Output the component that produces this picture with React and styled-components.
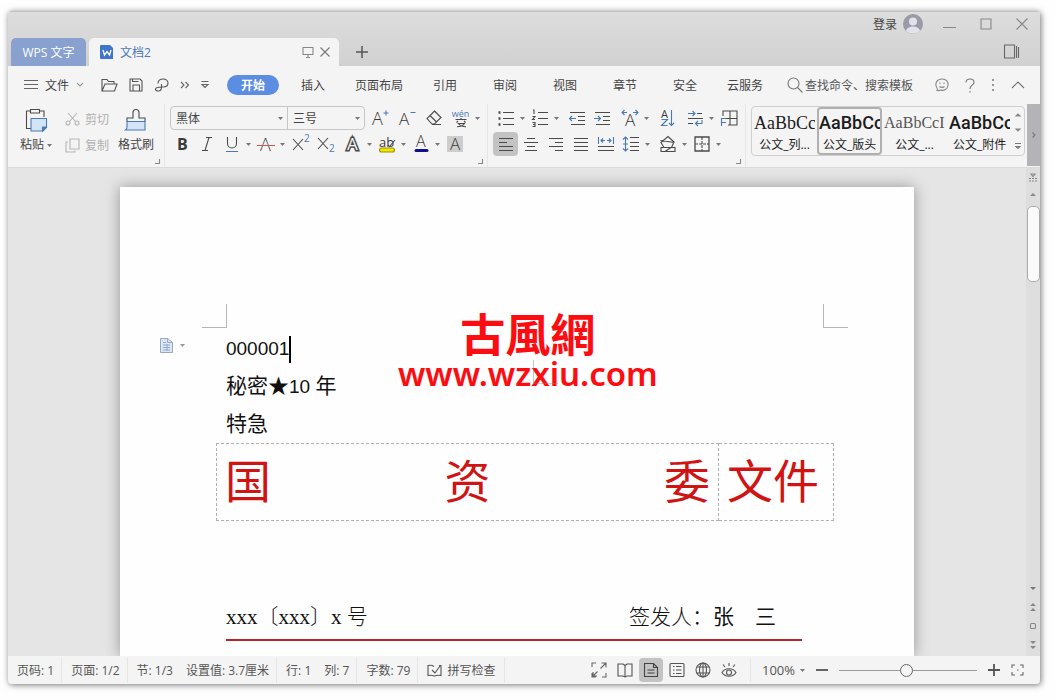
import { useState } from 'react';
import styled, { createGlobalStyle, css } from 'styled-components';

const MENUS = ['开始', '插入', '页面布局', '引用', '审阅', '视图', '章节', '安全', '云服务'];

const STYLES = [
  { sample: 'AaBbCc', label: '公文_列...', kind: 'song' },
  { sample: 'AaBbCc', label: '公文_版头', kind: 'hei' },
  { sample: 'AaBbCcI', label: '公文_...', kind: 'songSmall' },
  { sample: 'AaBbCc', label: '公文_附件', kind: 'hei' },
];

const BLUE = '#4a7ab5';

const Icon = ({ w = 18, h = 18, color = '#4a4a4a', children }) => (
  <svg
    width={w}
    height={h}
    viewBox={`0 0 ${w} ${h}`}
    fill="none"
    stroke={color}
    strokeWidth="1.1"
    aria-hidden="true"
  >
    {children}
  </svg>
);

const Caret = ({ color = '#777' }) => (
  <svg width="5" height="3" viewBox="0 0 5 3" fill={color} aria-hidden="true">
    <path d="M0 0h5L2.5 3z" />
  </svg>
);

const Tool = ({ label, arrow, spaced, active, children }) => (
  <ToolButton type="button" aria-label={label} $spaced={spaced}>
    <ToolFace $active={active}>{children}</ToolFace>
    {arrow && (
      <ToolArrow>
        <Caret />
      </ToolArrow>
    )}
  </ToolButton>
);

const TitleBar = () => (
  <TitleBarWrap>
    <Tabs>
      <HomeTab type="button">WPS 文字</HomeTab>
      <DocTab>
        <svg width="14" height="15" viewBox="0 0 14 15" aria-hidden="true">
          <path d="M1 0h9l3 3v11H1a1 1 0 0 1-1-1V1a1 1 0 0 1 1-1z" fill="#3f74cf" />
          <path d="M3 5l1.500 5L7 6.500 9.500 10 11 5" fill="none" stroke="#fff" strokeWidth="1.300" />
        </svg>
        <DocName>文档2</DocName>
        <PlainButton type="button" aria-label="窗口模式">
          <Icon w={12} h={12} color="#888">
            <path d="M1 1.500h10v7H1zM6 8.500v3M4 11.500h4" />
          </Icon>
        </PlainButton>
        <PlainButton type="button" aria-label="关闭标签">
          <Icon w={10} h={10} color="#777">
            <path d="M0.500 0.500l9 9M9.500 0.500l-9 9" />
          </Icon>
        </PlainButton>
      </DocTab>
      <NewTab type="button" aria-label="新建标签">
        <Icon w={12} h={12} color="#555">
          <path d="M6 0v12M0 6h12" strokeWidth="1.500" />
        </Icon>
      </NewTab>
    </Tabs>
    <WindowSide>
      <WindowControls>
        <Login type="button">
          登录
          <svg width="20" height="20" viewBox="0 0 20 20" aria-hidden="true">
            <circle cx="10" cy="10" r="10" fill="#9a9aa8" />
            <circle cx="10" cy="7.500" r="4" fill="#e2e2ea" />
            <path d="M3 17c1-6 13-6 14 0a10 10 0 0 1-14 0z" fill="#e2e2ea" />
          </svg>
        </Login>
        <PlainButton type="button" aria-label="最小化">
          <Icon w={13} h={12} color="#888">
            <path d="M0 9.500h13" />
          </Icon>
        </PlainButton>
        <PlainButton type="button" aria-label="最大化">
          <Icon w={12} h={12} color="#888">
            <path d="M1 1h10v10H1z" />
          </Icon>
        </PlainButton>
        <PlainButton type="button" aria-label="关闭">
          <Icon w={12} h={12} color="#888">
            <path d="M0.500 0.500l11 11M11.500 0.500l-11 11" />
          </Icon>
        </PlainButton>
      </WindowControls>
      <SideToggle type="button" aria-label="侧栏">
        <Icon w={16} h={15} color="#666">
          <path d="M.5 1h10v13H.5zM12.500 2v12M14.500 3v11" />
        </Icon>
      </SideToggle>
    </WindowSide>
  </TitleBarWrap>
);

const MenuBar = () => {
  const [current, setCurrent] = useState('开始');

  return (
    <MenuBarWrap>
      <FileButton type="button">
        <Icon w={14} h={12} color="#666">
          <path d="M0 1.500h14M0 5.500h14M0 9.500h14" />
        </Icon>
        文件
        <Icon w={8} h={6} color="#999">
          <path d="M1 1l3 3 3-3" />
        </Icon>
      </FileButton>
      <QuickAccess>
        <PlainButton type="button" aria-label="打开">
          <Icon w={17} h={14} color="#555">
            <path d="M1 13V1.500h5l1.500 2H13v2.500M1 13l3-7h12l-2.500 7z" />
          </Icon>
        </PlainButton>
        <PlainButton type="button" aria-label="保存">
          <Icon w={14} h={14} color="#555">
            <path d="M1 1h10l2 2v10H1zM4 13V7h6.500v6M3.500 1v2.500h6" />
          </Icon>
        </PlainButton>
        <PlainButton type="button" aria-label="输出">
          <Icon w={15} h={14} color="#555">
            <path d="M4 5.500C4 2.500 6 1 9 1s5 1.500 5 4-2 4-5 4H7.500V6M7.500 9c0 2.500-1 4-3 4-1.500 0-3-.5-3-1.800C1.500 9.500 4 9 7.500 9" />
          </Icon>
        </PlainButton>
        <PlainButton type="button" aria-label="更多">
          <Icon w={10} h={8} color="#666">
            <path d="M1 1l3 3-3 3M5.500 1l3 3-3 3" />
          </Icon>
        </PlainButton>
        <PlainButton type="button" aria-label="自定义快速访问">
          <Icon w={8} h={8} color="#666">
            <path d="M0.500 0.500h7M1 3.500l3 3 3-3z" />
          </Icon>
        </PlainButton>
      </QuickAccess>
      <MenuTabs>
        {MENUS.map((menu) => (
          <MenuTab
            key={menu}
            type="button"
            $active={menu === current}
            onClick={() => setCurrent(menu)}
          >
            {menu}
          </MenuTab>
        ))}
      </MenuTabs>
      <Search>
        <Icon w={16} h={16} color="#777">
          <circle cx="6.500" cy="6.500" r="5.500" />
          <path d="M10.500 10.500l5 5" />
        </Icon>
        <SearchInput aria-label="查找" placeholder="查找命令、搜索模板" />
      </Search>
      <MenuExtras>
        <PlainButton type="button" aria-label="反馈">
          <Icon w={14} h={14} color="#888">
            <path d="M2 12.500c.6-.8.6-1.600 0-2.500C-1 5 2.500 1 7 1s6.500 3 6 6.500c-.5 3.500-4 5.500-7 4.600-1.300.5-2.500.7-4 .4zM5 4.500v1.500M9 4.500v1.500M4.500 8.500c1.200 1.200 3.800 1.200 5 0" />
          </Icon>
        </PlainButton>
        <PlainButton type="button" aria-label="帮助">
          <Icon w={10} h={15} color="#777">
            <path d="M1 4.500C1 2 3 1 5 1s4 1.300 4 3.500C9 7 5 7 5 11M5 13v1.500" />
          </Icon>
        </PlainButton>
        <PlainButton type="button" aria-label="选项">
          <Icon w={4} h={12} color="#777">
            <path d="M2 0v2M2 5v2M2 10v2" strokeWidth="1.500" />
          </Icon>
        </PlainButton>
        <PlainButton type="button" aria-label="收起功能区">
          <Icon w={14} h={8} color="#777">
            <path d="M1 7l6-6 6 6" />
          </Icon>
        </PlainButton>
      </MenuExtras>
    </MenuBarWrap>
  );
};

const Launcher = () => (
  <LauncherButton type="button" aria-label="更多设置">
    <Icon w={5} h={5} color="#888">
      <path d="M4.500 0v4.500H0" />
    </Icon>
  </LauncherButton>
);

const ClipboardGroup = () => (
  <ClipboardWrap>
    <BigTool type="button">
      <Icon w={24} h={24}>
        <path d="M6 3H2.500v17.500H7M16 3h4v6M6.500 1.500h9V5h-9z" />
        <path d="M7 10.500h15.500v9l-3.500 3.500H7z" fill="#d3e4f7" stroke={BLUE} />
        <path d="M22 19h-3.500v4z" fill="#4a7ab5" stroke={BLUE} />
      </Icon>
      <BigLabel>
        粘贴
        <Caret />
      </BigLabel>
    </BigTool>
    <ClipColumn>
      <ClipTool type="button" disabled>
        <Icon w={15} h={14} color="#b5b5b5">
          <path d="M3 1l8 9M12 1L4 10" />
          <circle cx="3" cy="11" r="2" />
          <circle cx="12" cy="11" r="2" />
        </Icon>
        剪切
      </ClipTool>
      <ClipTool type="button" disabled>
        <Icon w={15} h={15} color="#b5b5b5">
          <path d="M5 1h9v10H5zM3 4H1v10h9v-1.500" />
        </Icon>
        复制
      </ClipTool>
    </ClipColumn>
    <BigTool type="button">
      <Icon w={24} h={24}>
        <path d="M3 13.500V10h6V4.500a3 3 0 0 1 6 0V10h6v3.500" />
        <path d="M3 13.500h18V22H1.500c1-.8 1.500-2 1.500-3z" fill="#d3e4f7" stroke={BLUE} />
      </Icon>
      <BigLabel>格式刷</BigLabel>
    </BigTool>
    <Launcher />
  </ClipboardWrap>
);

const FontGroup = () => (
  <FontWrap>
    <ToolRow $gap={2}>
      <FontBox>
        <SelectWrap $width={116}>
          <Select aria-label="字体" defaultValue="黑体">
            <option>黑体</option>
            <option>宋体</option>
          </Select>
          <Caret />
        </SelectWrap>
        <SelectWrap $width={77}>
          <Select aria-label="字号" defaultValue="三号">
            <option>三号</option>
            <option>四号</option>
          </Select>
          <Caret />
        </SelectWrap>
      </FontBox>
      <Tool label="增大字号">
        <Icon>
          <Glyph x="1" y="16" $size={18}>A</Glyph>
          <path d="M12.500 4h5M15 1.500v5" stroke={BLUE} />
        </Icon>
      </Tool>
      <Tool label="减小字号">
        <Icon>
          <Glyph x="1" y="16" $size={17}>A</Glyph>
          <path d="M12.500 3.500h5" stroke={BLUE} />
        </Icon>
      </Tool>
      <Tool label="清除格式">
        <Icon>
          <path d="M9.500 2L16 8.500 9.500 15H7L2 9.500zM5 6.500l6.500 6.500M7 15.500h9" />
        </Icon>
      </Tool>
      <Tool label="拼音指南" arrow>
        <PinyinIcon>
          <span>wén</span>
          <Icon w={12} h={9}>
            <path d="M6 0v1.500M.5 1.500h11M3 3L1.500 4.500M9 3l1.500 1.500M2.500 5.500h7C8 8 5 8.700 2 8.700M3.500 5.500C5 7.800 8 8.700 11 8.700" />
          </Icon>
        </PinyinIcon>
      </Tool>
    </ToolRow>
    <ToolRow>
      <Tool label="加粗">
        <Icon>
          <Glyph x="4" y="15" $size={16} $weight={700}>B</Glyph>
        </Icon>
      </Tool>
      <Tool label="倾斜">
        <Icon>
          <path d="M8 2.500h6M4 15.500h6M11 2.500l-4 13" />
        </Icon>
      </Tool>
      <Tool label="下划线" arrow>
        <Icon>
          <path d="M4.500 2v6.500a4.500 4.500 0 0 0 9 0V2" />
          <path d="M3 16.500h12" stroke={BLUE} />
        </Icon>
      </Tool>
      <Tool label="删除线" arrow>
        <Icon>
          <Glyph x="3" y="16" $size={18}>A</Glyph>
          <path d="M0 10.500h18" stroke="#c55" strokeWidth="1.200" />
        </Icon>
      </Tool>
      <Tool label="上标">
        <Icon>
          <path d="M2 4l10 11M12 4L2 15" />
          <Glyph x="13" y="7" $size={10} $weight={400} $color={BLUE}>2</Glyph>
        </Icon>
      </Tool>
      <Tool label="下标">
        <Icon>
          <path d="M2 3l10 11M12 3L2 14" />
          <Glyph x="13" y="17" $size={10} $weight={400} $color={BLUE}>2</Glyph>
        </Icon>
      </Tool>
      <Tool label="文字效果" arrow spaced>
        <Icon>
          <OutlineGlyph x="3" y="15">A</OutlineGlyph>
        </Icon>
      </Tool>
      <Tool label="突出显示" arrow>
        <Icon>
          <rect x="1.500" y="13" width="15" height="4" rx="2" fill="#f1e800" stroke="#98920c" />
          <Glyph x="1" y="12" $size={13} $weight={400}>ab</Glyph>
          <path d="M11 12l6-7" />
        </Icon>
      </Tool>
      <Tool label="字体颜色" arrow>
        <Icon>
          <Glyph x="4" y="12" $size={16}>A</Glyph>
          <path d="M4 15.500h11" stroke="#10108c" strokeWidth="3" strokeLinecap="round" />
        </Icon>
      </Tool>
      <Tool label="字符底纹">
        <Icon>
          <rect x="1" y="1" width="16" height="16" fill="#cdcdcd" stroke="none" />
          <Glyph x="4" y="15" $size={17}>A</Glyph>
        </Icon>
      </Tool>
    </ToolRow>
    <Launcher />
  </FontWrap>
);

const ParagraphGroup = () => (
  <ParagraphWrap>
    <ToolRow>
      <Tool label="项目符号" arrow>
        <Icon>
          <path d="M6 3.500h11M6 9.500h11M6 15.500h11" />
          <path d="M1.500 3.500h2M1.500 9.500h2M1.500 15.500h2" strokeWidth="2.500" />
        </Icon>
      </Tool>
      <Tool label="编号" arrow>
        <Icon>
          <path d="M7 3.500h10M7 9.500h10M7 15.500h10" />
          <path d="M2 1l1 0v4M1.500 7.500h2.500l-2.500 3h2.500M1.500 13.500h2.500v4H1.500M2 15.500h2" />
        </Icon>
      </Tool>
      <Tool label="减少缩进" spaced>
        <Icon>
          <path d="M2 3.500h15M10 7.500h7M10 11.500h7M3 15.500h14" />
          <path d="M8 9.500H1.500M4 7L1.500 9.500 4 12" stroke={BLUE} />
        </Icon>
      </Tool>
      <Tool label="增加缩进">
        <Icon>
          <path d="M2 3.500h15M10 7.500h7M10 11.500h7M3 15.500h14" />
          <path d="M1 9.500h6.500M5 7l2.500 2.500L5 12" stroke={BLUE} />
        </Icon>
      </Tool>
      <Tool label="字符缩放" arrow spaced>
        <Icon>
          <Glyph x="4" y="17" $size={17}>A</Glyph>
          <path d="M6 3.500H1M3.500 1L1 3.500 3.500 6M12 3.500h5M14.500 1L17 3.500 14.500 6" stroke={BLUE} />
        </Icon>
      </Tool>
      <Tool label="排序" spaced>
        <Icon>
          <Glyph x="3" y="9" $size={11} $weight={400}>A</Glyph>
          <path d="M3.500 10.500h6l-6 6h6M13.500 1v15.500M11 14l2.500 2.500L16 14" stroke={BLUE} />
        </Icon>
      </Tool>
      <Tool label="换行" arrow spaced>
        <Icon>
          <path d="M2 9.500h15M2 14.500h5M11 4.500h5" />
          <path d="M2 4.500h7M6.500 2L9 4.500 6.500 7M16 11v3.500h-6M12 12l-2.500 2.500L12 17" stroke={BLUE} />
        </Icon>
      </Tool>
      <Tool label="制表位">
        <Icon>
          <path d="M3 7V2h14v14H8M10 2v14M3 9.500h14" />
          <path d="M6 9.500H1.500V17M1.500 13.500H6" stroke={BLUE} />
        </Icon>
      </Tool>
    </ToolRow>
    <ToolRow>
      <Tool label="左对齐" active>
        <Icon>
          <path d="M2 3.500h14M2 7.500h8M2 11.500h14M2 15.500h14" />
        </Icon>
      </Tool>
      <Tool label="居中">
        <Icon>
          <path d="M5 3.500h8M2 7.500h14M5 11.500h8M3 15.500h12" />
        </Icon>
      </Tool>
      <Tool label="右对齐">
        <Icon>
          <path d="M2 3.500h14M8 7.500h8M2 11.500h14M8 15.500h8" />
        </Icon>
      </Tool>
      <Tool label="两端对齐">
        <Icon>
          <path d="M2 3.500h14M2 7.500h14M2 11.500h14M2 15.500h14" />
        </Icon>
      </Tool>
      <Tool label="分散对齐">
        <Icon>
          <path d="M1 11.500h16M1 15.500h16" />
          <path d="M1.500 2v7M16.500 2v7M8 5.500H4M6 3.500l-2 2 2 2M10 5.500h4M12 3.500l2 2-2 2" stroke={BLUE} />
        </Icon>
      </Tool>
      <Tool label="行距" arrow>
        <Icon>
          <path d="M8 2.500h9M8 7.500h9M8 11.500h9M8 15.500h9" />
          <path d="M3.500 2v14M1 4.500L3.500 2 6 4.500M1 13.500L3.500 16 6 13.500M1 9h5" stroke={BLUE} />
        </Icon>
      </Tool>
      <Tool label="底纹颜色" arrow spaced>
        <Icon>
          <path d="M2 7.500L9 1.500l6 5.500-2.500 5.500H5zM1.500 5.500l14 2M2 12.500h14v4H2zM6 16.500l6-4" />
        </Icon>
      </Tool>
      <Tool label="边框" arrow>
        <Icon>
          <path d="M2 2h14v14H2z" strokeWidth="1.300" />
          <path d="M9 2v14M2 9h14" strokeDasharray="3 1" />
        </Icon>
      </Tool>
    </ToolRow>
    <Launcher />
  </ParagraphWrap>
);

const StyleGallery = () => (
  <GalleryWrap>
    <Gallery>
      {STYLES.map((item, index) => (
        <StyleCard key={item.label} type="button" $active={index === 1}>
          <Sample $kind={item.kind}>{item.sample}</Sample>
          <StyleName>{item.label}</StyleName>
        </StyleCard>
      ))}
      <GalleryScroll>
        <PlainButton type="button" aria-label="上一行">
          <Icon w={6} h={4} color="#888">
            <path d="M1 3l2-2 2 2z" fill="#888" />
          </Icon>
        </PlainButton>
        <PlainButton type="button" aria-label="下一行">
          <Icon w={6} h={4} color="#888">
            <path d="M1 1l2 2 2-2z" fill="#888" />
          </Icon>
        </PlainButton>
        <PlainButton type="button" aria-label="展开样式">
          <Icon w={6} h={7} color="#777">
            <path d="M0 .5h6M1 3.500l2 2 2-2z" />
          </Icon>
        </PlainButton>
      </GalleryScroll>
    </Gallery>
    <MoreTools type="button" aria-label="更多工具">
      <Icon w={4} h={6} color="#777">
        <path d="M.5 .5L3 3 .5 5.500" />
      </Icon>
    </MoreTools>
  </GalleryWrap>
);

const Document = () => (
  <Workspace>
    <Canvas>
      <Page>
        <Margins>
          <Corner $side="left" />
          <Corner $side="right" />
        </Margins>
        <ParagraphMark type="button" aria-label="段落布局">
          <svg width="13" height="15" viewBox="0 0 13 15" aria-hidden="true">
            <path d="M.5 .5h7l5 4v10H.5z" fill="#dce6f2" stroke="#94a9c8" />
            <path
              d="M7.500 .5v4h5M3 4.500h3M3 7h7M3 9.500h7M3 12h7M7 6v7"
              fill="none"
              stroke="#94a9c8"
            />
          </svg>
          <Caret color="#999" />
        </ParagraphMark>
        <Line>
          <Latin>000001</Latin>
          <TextCursor />
        </Line>
        <Line>
          秘密★<Latin>10 </Latin>年
        </Line>
        <Line>特急</Line>
        <HeadTable>
          <tbody>
            <tr>
              <OrgCell>
                <Spread>
                  <span>国</span>
                  <span>资</span>
                  <span>委</span>
                </Spread>
              </OrgCell>
              <KindCell>文件</KindCell>
            </tr>
          </tbody>
        </HeadTable>
        <IssueRow>
          <span>xxx〔xxx〕x 号</span>
          <span>
            签发人：<Signer>张　三</Signer>
          </span>
        </IssueRow>
        <Watermark>
          <Brand>古風網</Brand>
          <Site>www.wzxiu.com</Site>
          <CenterMark />
        </Watermark>
      </Page>
    </Canvas>
    <Scrollbar>
      <Icon w={10} h={9} color="#888">
        <path d="M3 1h4L5 3.500zM1 5.500h2M4 5.500h2M7 5.500h2M1 8h2M4 8h2M7 8h2" />
      </Icon>
      <Icon w={6} h={4}>
        <path d="M0 4h6L3 1z" fill="#888" stroke="none" />
      </Icon>
      <Thumb />
      <ScrollEnd>
        <Icon w={6} h={4}>
          <path d="M0 0h6L3 3z" fill="#777" stroke="none" />
        </Icon>
        <Icon w={6} h={8}>
          <path d="M0 3h6L3 0zM0 8h6L3 5z" fill="#888" stroke="none" />
        </Icon>
        <Icon w={6} h={6} color="#888">
          <rect x=".5" y=".5" width="5" height="5" rx="1" />
        </Icon>
        <Icon w={6} h={8}>
          <path d="M0 0h6L3 3zM0 5h6L3 8z" fill="#888" stroke="none" />
        </Icon>
      </ScrollEnd>
    </Scrollbar>
  </Workspace>
);

const StatusBar = () => {
  const [zoom, setZoom] = useState(49);

  return (
    <StatusWrap>
      <StatusCell>页码: 1</StatusCell>
      <StatusCell>页面: 1/2</StatusCell>
      <StatusCell>
        <span>节: 1/3</span>
        <span>设置值: 3.7厘米</span>
      </StatusCell>
      <StatusCell>
        <span>行: 1</span>
        <span>列: 7</span>
      </StatusCell>
      <StatusCell>字数: 79</StatusCell>
      <SpellCheck type="button">
        <Icon w={15} h={13} color="#555">
          <path d="M7 2.500C5 1 3 1 1 1.500v10c2-.5 4-.5 6.500.5 2.500-1 4.500-1 6.500-.5v-10h-2M5 6l3 3 5-7" />
        </Icon>
        拼写检查
      </SpellCheck>
      <ViewButtons>
        <ViewButton type="button" aria-label="全屏">
          <Icon w={16} h={16} color="#666">
            <path d="M1 5V1h4M1 11v4h4M15 11v4h-4M9.500 6.500L15 1M10.500 1H15v4.500M6.500 9.500L2 14M2 10v4h4" />
          </Icon>
        </ViewButton>
        <ViewButton type="button" aria-label="阅读版式">
          <Icon w={16} h={16} color="#555">
            <path d="M1 2h5l2 1.500L10 2h5v12h-5l-2 1-2-1H1zM8 3.500V15" />
          </Icon>
        </ViewButton>
        <ViewButton type="button" aria-label="页面视图" $active>
          <Icon w={16} h={16} color="#444">
            <path d="M1.500 1.500h9l4 4v9h-13zM10.500 1.500v4h4M4.500 8h7M4.500 11h7" />
          </Icon>
        </ViewButton>
        <ViewButton type="button" aria-label="大纲">
          <Icon w={16} h={16} color="#555">
            <rect x="1" y="1.500" width="14" height="13" rx="1" />
            <path d="M4 4.500h1.500M4 8h1.500M4 11.500h1.500M7 4.500h5.500M7 8h5.500M7 11.500h5.500" />
          </Icon>
        </ViewButton>
        <ViewButton type="button" aria-label="Web 版式">
          <Icon w={16} h={16} color="#555">
            <circle cx="8" cy="8" r="7" />
            <ellipse cx="8" cy="8" rx="3.500" ry="7" />
            <path d="M8 1v14M2 5h12M2 11h12" />
          </Icon>
        </ViewButton>
        <ViewButton type="button" aria-label="护眼模式">
          <Icon w={16} h={16} color="#555">
            <path d="M1 10.500c3-5 11-5 14 0-3 5-11 5-14 0zM8 1v3M2 2.500l2 2.500M14 2.500L12 5" />
            <circle cx="8" cy="10.500" r="2.500" />
          </Icon>
        </ViewButton>
      </ViewButtons>
      <ZoomArea>
        <ZoomValue type="button">
          100%
          <Caret />
        </ZoomValue>
        <PlainButton type="button" aria-label="缩小" onClick={() => setZoom(zoom - 5)}>
          <Icon w={12} h={12} color="#555">
            <path d="M0 6h12" strokeWidth="1.800" />
          </Icon>
        </PlainButton>
        <ZoomSlider
          type="range"
          aria-label="显示比例"
          value={zoom}
          onChange={(e) => setZoom(Number(e.target.value))}
        />
        <PlainButton type="button" aria-label="放大" onClick={() => setZoom(zoom + 5)}>
          <Icon w={12} h={12} color="#555">
            <path d="M0 6h12M6 0v12" strokeWidth="1.800" />
          </Icon>
        </PlainButton>
        <PlainButton type="button" aria-label="最佳显示比例">
          <Icon w={13} h={12} color="#666">
            <path d="M1 4V1h3M9 1h3v3M12 8v3H9M4 11H1V8M6 6h1.500" />
          </Icon>
        </PlainButton>
      </ZoomArea>
    </StatusWrap>
  );
};

const App = () => (
  <>
    <GlobalStyle />
    <Desktop>
      <AppWindow>
        <TitleBar />
        <MenuBar />
        <Ribbon>
          <ClipboardGroup />
          <FontGroup />
          <ParagraphGroup />
          <StyleGallery />
        </Ribbon>
        <Document />
        <StatusBar />
      </AppWindow>
    </Desktop>
  </>
);

export default App;

const GlobalStyle = createGlobalStyle`
  * {
    box-sizing: border-box;
  }

  body {
    margin: 0;
    background: #fefefe;
    font-family: 'Open Sans', 'Noto Sans CJK SC', sans-serif;
    font-size: 12px;
    color: #444;
  }

  button,
  input,
  select {
    margin: 0;
    padding: 0;
    border: none;
    background: none;
    font: inherit;
    color: inherit;
  }

  svg {
    display: block;
    flex: none;
    overflow: visible;
  }
`;

const Desktop = styled.div`
  height: 100vh;
  padding: 11px 16px 16px 8px;
`;

const AppWindow = styled.div`
  display: flex;
  flex-direction: column;
  height: 100%;
  overflow: hidden;
  border-radius: 4px;
  background: #f4f4f4;
  box-shadow: 1px 1px 6px rgba(0, 0, 0, 0.55);
`;

const PlainButton = styled.button`
  display: flex;
  align-items: center;
  justify-content: center;
`;

const TitleBarWrap = styled.header`
  display: flex;
  justify-content: space-between;
  flex: none;
  height: 55px;
  background: linear-gradient(#dddddd, #d1d1d1);
  border-top: 1px solid #c2c2c2;
`;

const Tabs = styled.div`
  display: flex;
  align-items: flex-end;
  padding-left: 3px;
`;

const HomeTab = styled.button`
  width: 75px;
  height: 28px;
  margin-right: 3px;
  border-radius: 5px 5px 0 0;
  background: #88a1cf;
  color: #fff;
  font-size: 12px;
`;

const DocTab = styled.div`
  display: flex;
  align-items: center;
  gap: 6px;
  width: 250px;
  height: 28px;
  padding: 0 9px 0 11px;
  border-radius: 5px 5px 0 0;
  background: #f4f4f4;
`;

const DocName = styled.span`
  flex: 1;
  color: #4a7ab5;
`;

const NewTab = styled(PlainButton)`
  width: 46px;
  height: 28px;
`;

const WindowSide = styled.div`
  display: flex;
  flex-direction: column;
  align-items: flex-end;
`;

const WindowControls = styled.div`
  display: flex;
  align-items: center;
  gap: 24px;
  height: 24px;
  padding-right: 12px;
`;

const Login = styled(PlainButton)`
  gap: 6px;
  margin-right: -4px;
`;

const SideToggle = styled(PlainButton)`
  margin: 8px 20px 0 0;
`;

const MenuBarWrap = styled.nav`
  display: flex;
  align-items: center;
  flex: none;
  height: 38px;
  padding: 0 15px 0 16px;
`;

const FileButton = styled(PlainButton)`
  flex: none;
  gap: 7px;
  margin-right: 17px;
  white-space: nowrap;
`;

const QuickAccess = styled.div`
  display: flex;
  align-items: center;
  gap: 11px;
  flex: none;
`;

const MenuTabs = styled.div`
  display: flex;
  align-items: center;
  flex: none;
  margin-left: 14px;
`;

const MenuTab = styled.button`
  min-width: 60px;
  height: 20px;
  padding: 0 12px;
  white-space: nowrap;

  ${({ $active }) =>
    $active &&
    css`
      min-width: 52px;
      margin: 0 4px;
      border-radius: 10px;
      background: #5b8de3;
      color: #fff;
      font-weight: 700;
    `}
`;

const Search = styled.label`
  display: flex;
  align-items: center;
  gap: 2px;
  flex: 1;
  margin-left: 12px;
`;

const SearchInput = styled.input`
  flex: 1;
  width: 0;
  min-width: 110px;
  outline: none;

  &::placeholder {
    color: #555;
    opacity: 1;
  }
`;

const MenuExtras = styled.div`
  display: flex;
  align-items: center;
  gap: 16px;
  margin-left: 16px;
`;

const Ribbon = styled.section`
  display: flex;
  flex: none;
  height: 64px;
  border-bottom: 1px solid #dadada;
`;

const RibbonGroup = styled.div`
  display: flex;
  position: relative;
  flex: none;
  border-right: 1px solid #e6e6e6;
`;

const ClipboardWrap = styled(RibbonGroup)`
  gap: 9px;
  padding: 4px 10px 0 12px;
`;

const BigTool = styled.button`
  display: flex;
  flex-direction: column;
  align-items: center;
  gap: 4px;
  height: 48px;
`;

const BigLabel = styled.span`
  display: flex;
  align-items: center;
  gap: 3px;
  line-height: 18px;
`;

const ClipColumn = styled.div`
  display: flex;
  flex-direction: column;
  justify-content: space-between;
  height: 48px;
  padding-left: 4px;
`;

const ClipTool = styled.button`
  display: flex;
  align-items: center;
  gap: 5px;
  height: 22px;
  color: #b0b0b0;
`;

const LauncherButton = styled.button`
  position: absolute;
  right: 4px;
  bottom: 3px;
`;

const ToolRow = styled.div`
  display: flex;
  align-items: center;
  gap: ${({ $gap }) => $gap || 0}px;
  height: 26px;
`;

const FontWrap = styled(RibbonGroup)`
  flex-direction: column;
  width: 323px;
  padding: 1px 5px 0 4px;
`;

const ParagraphWrap = styled(RibbonGroup)`
  flex-direction: column;
  width: 258px;
  padding: 1px 0 0 5px;
`;

const ToolButton = styled.button`
  display: flex;
  align-items: center;
  margin-left: ${({ $spaced }) => ($spaced ? 3 : 0)}px;
`;

const ToolFace = styled.span`
  display: flex;
  align-items: center;
  justify-content: center;
  width: 25px;
  height: 24px;
  border-radius: 4px;
  background: ${({ $active }) => ($active ? '#c3c3c3' : 'transparent')};
`;

const ToolArrow = styled.span`
  display: flex;
  justify-content: center;
  width: 9px;
`;

const PinyinIcon = styled.span`
  display: flex;
  flex-direction: column;
  align-items: center;
  color: ${BLUE};
  font-size: 9px;
  line-height: 9px;
`;

const Glyph = styled.text`
  fill: ${({ $color }) => $color || '#3a3a3a'};
  stroke: none;
  font-family: 'Open Sans', sans-serif;
  font-size: ${({ $size }) => $size}px;
  font-weight: ${({ $weight }) => $weight || 300};
`;

const OutlineGlyph = styled.text`
  fill: #f4f4f4;
  stroke: #4a4a4a;
  stroke-width: 3px;
  paint-order: stroke;
  font-family: 'Open Sans', sans-serif;
  font-size: 17px;
  font-weight: 400;
`;

const FontBox = styled.div`
  display: flex;
  height: 24px;
  margin-left: 1px;
  border: 1px solid #c6c6c6;
  border-radius: 4px;
`;

const SelectWrap = styled.div`
  display: flex;
  align-items: center;
  width: ${({ $width }) => $width}px;
  padding-right: 4px;

  & + & {
    border-left: 1px solid #c6c6c6;
  }
`;

const Select = styled.select`
  flex: 1;
  min-width: 0;
  padding-left: 5px;
  appearance: none;
  outline: none;
`;

const GalleryWrap = styled.div`
  display: flex;
  flex: 1;
  min-width: 0;
  gap: 2px;
  padding-left: 5px;
`;

const Gallery = styled.div`
  display: flex;
  flex: 1;
  min-width: 0;
  height: 50px;
  margin-top: 2px;
  overflow: hidden;
  border: 1px solid #cfcfcf;
  border-radius: 4px;
`;

const StyleCard = styled.button`
  display: flex;
  flex-direction: column;
  justify-content: center;
  flex: none;
  width: 65px;
  height: 48px;
  overflow: hidden;
  border: 2px solid ${({ $active }) => ($active ? '#b0b0b0' : 'transparent')};
  border-radius: 4px;
  color: #1c1c1c;
`;

const sampleFonts = {
  song: css`
    font-family: 'Liberation Serif', serif;
    font-size: 18px;
  `,
  songSmall: css`
    font-family: 'Liberation Serif', serif;
    font-size: 16px;
    color: #555;
  `,
  hei: css`
    font-family: Roboto, sans-serif;
    font-size: 18px;
    font-weight: 500;
  `,
};

const Sample = styled.span`
  width: 100%;
  overflow: hidden;
  line-height: 28px;
  text-align: left;
  white-space: nowrap;
  ${({ $kind }) => sampleFonts[$kind]}
`;

const StyleName = styled.span`
  width: 100%;
  line-height: 16px;
  text-align: center;
  white-space: nowrap;
`;

const GalleryScroll = styled.div`
  display: flex;
  flex: 1;
  flex-direction: column;
  align-items: center;
  justify-content: space-around;
`;

const MoreTools = styled(PlainButton)`
  width: 13px;
  height: 62px;
  background: #b4b4b8;
`;

const Workspace = styled.main`
  display: flex;
  flex: 1;
  min-height: 0;
  background: #e5e5e5;
`;

const Canvas = styled.div`
  flex: 1;
  min-width: 0;
  padding-top: 19px;
  overflow: hidden;
`;

const Page = styled.article`
  position: relative;
  width: 78%;
  min-height: 100%;
  margin: 0 auto;
  padding: 117px 90px 0 106px;
  background: #fefefe;
  box-shadow: 0 0 14px rgba(0, 0, 0, 0.35);
  color: #111;
  font-family: 'Noto Sans CJK SC', sans-serif;
  font-size: 21px;
`;

const Margins = styled.div`
  display: flex;
  justify-content: space-between;
  height: 24px;
  margin: 0 -24px;
`;

const Corner = styled.span`
  width: 25px;
  border-bottom: 1px solid #b5b5b5;
  ${({ $side }) => ($side === 'left' ? 'border-right' : 'border-left')}: 1px solid #b5b5b5;
`;

const ParagraphMark = styled.button`
  display: flex;
  align-items: center;
  gap: 7px;
  position: absolute;
  top: 151px;
  left: 40px;
`;

const Line = styled.p`
  height: 38px;
  margin: 0;
  line-height: 36px;
  white-space: pre;
`;

const Latin = styled.span`
  font-family: 'Liberation Sans', sans-serif;
  font-size: 19px;
`;

const TextCursor = styled.span`
  display: inline-block;
  width: 2px;
  height: 27px;
  background: #000;
  vertical-align: middle;
`;

const HeadTable = styled.table`
  width: calc(100% + 20px);
  height: 78px;
  margin: 1px -10px 0;
  border-collapse: collapse;
  color: #d01414;
  font-size: 46px;
  line-height: 60px;
`;

const OrgCell = styled.td`
  padding: 0 8px 8px;
  border: 1px dashed #b0b0b0;
`;

const KindCell = styled.td`
  width: 115px;
  padding: 0 8px 8px;
  border: 1px dashed #b0b0b0;
  white-space: nowrap;
`;

const Spread = styled.div`
  display: flex;
  justify-content: space-between;
`;

const IssueRow = styled.div`
  display: flex;
  justify-content: space-between;
  margin: 78px 22px 0 0;
  padding: 0 26px 4px 0;
  border-bottom: 2px solid #b92525;
  font-family: 'Liberation Serif', 'Noto Sans CJK SC', serif;
  font-weight: 300;
  line-height: 36px;
`;

const Signer = styled.span`
  font-weight: 400;
`;

const Watermark = styled.div`
  position: absolute;
  top: 122px;
  left: 35%;
  display: flex;
  flex-direction: column;
  align-items: center;
  color: #fb0d12;
  font-weight: 700;
`;

const Brand = styled.span`
  font-size: 45px;
  line-height: 48px;
`;

const Site = styled.span`
  font-family: 'Noto Sans', sans-serif;
  font-size: 33px;
  font-weight: 600;
  line-height: 34px;
`;

const CenterMark = styled.span`
  position: absolute;
  right: 100px;
  bottom: 7px;
  width: 25px;
  height: 24px;
  border-bottom: 1px solid rgba(140, 140, 140, 0.4);
  border-left: 1px solid rgba(140, 140, 140, 0.5);
`;

const Scrollbar = styled.div`
  display: flex;
  flex-direction: column;
  align-items: center;
  gap: 10px;
  width: 14px;
  padding: 5px 0 7px;
  background: #dedede;
`;

const Thumb = styled.div`
  width: 13px;
  height: 76px;
  border: 1px solid #aaa;
  border-radius: 5px;
  background: #fafafa;
`;

const ScrollEnd = styled.div`
  display: flex;
  flex-direction: column;
  align-items: center;
  gap: 12px;
  margin-top: auto;
`;

const StatusWrap = styled.footer`
  display: flex;
  align-items: center;
  flex: none;
  height: 28px;
  color: #555;
`;

const StatusCell = styled.div`
  display: flex;
  align-items: center;
  flex: none;
  gap: 13px;
  height: 26px;
  padding: 0 7px 0 9px;
  border-right: 1px solid #e6e6e6;
  white-space: nowrap;
`;

const SpellCheck = styled.button`
  display: flex;
  align-items: center;
  flex: none;
  gap: 5px;
  height: 26px;
  padding: 0 9px;
  border-right: 1px solid #e6e6e6;
`;

const ViewButtons = styled.div`
  display: flex;
  gap: 2px;
  margin-left: auto;
  padding-right: 9px;
  border-right: 1px solid #e6e6e6;
`;

const ViewButton = styled(PlainButton)`
  width: 24px;
  height: 24px;
  border-radius: 4px;
  background: ${({ $active }) => ($active ? '#c3c3c3' : 'transparent')};
`;

const ZoomArea = styled.div`
  display: flex;
  align-items: center;
  gap: 11px;
  padding: 0 16px 0 11px;
`;

const ZoomValue = styled(PlainButton)`
  gap: 5px;
  font-size: 13px;
`;

const ZoomSlider = styled.input`
  width: 138px;
  height: 14px;
  appearance: none;
  outline: none;

  &::-webkit-slider-runnable-track {
    height: 13px;
    background: linear-gradient(#999, #999) center / 100% 1px no-repeat;
  }

  &::-webkit-slider-thumb {
    appearance: none;
    width: 13px;
    height: 13px;
    border: 1px solid #666;
    border-radius: 50%;
    background: #f4f4f4;
  }
`;
